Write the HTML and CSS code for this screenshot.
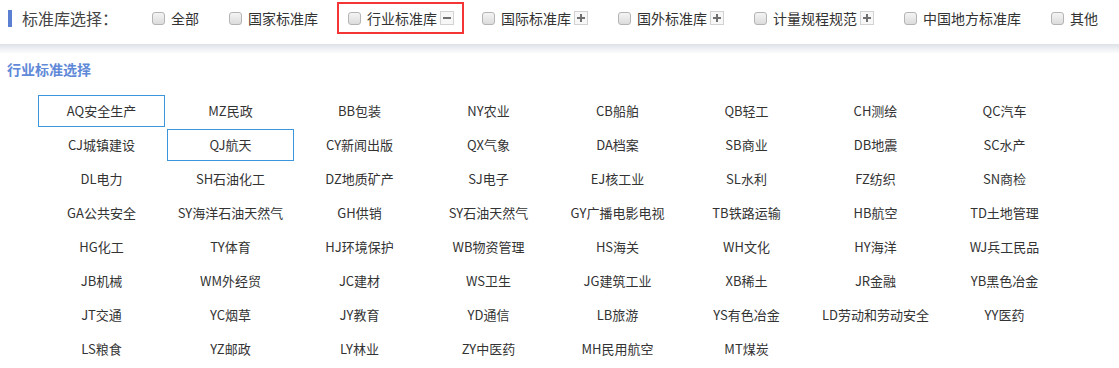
FILE: index.html
```html
<!DOCTYPE html>
<html>
    <head>
        <meta charset="UTF-8">
        <title>标准库选择</title>
        <link rel="stylesheet" href="styles.css">
    </head>
    <body>
        <div class="lib-bar">
            <span class="lib-title">标准库选择：</span>
            <ul class="lib-list">
                <li><i class="chk"></i>全部</li>
                <li><i class="chk"></i>国家标准库</li>
                <li class="on"><i class="chk"></i>行业标准库<b class="tog minus"></b></li>
                <li><i class="chk"></i>国际标准库<b class="tog plus"></b></li>
                <li><i class="chk"></i>国外标准库<b class="tog plus"></b></li>
                <li><i class="chk"></i>计量规程规范<b class="tog plus"></b></li>
                <li><i class="chk"></i>中国地方标准库</li>
                <li><i class="chk"></i>其他</li>
            </ul>
        </div>
        <div class="shade"></div>

        <div class="sub">
            <h3>行业标准选择</h3>
            <ul class="grid">
                <li class="sel">AQ安全生产</li>
                <li>MZ民政</li>
                <li>BB包装</li>
                <li>NY农业</li>
                <li>CB船舶</li>
                <li>QB轻工</li>
                <li>CH测绘</li>
                <li>QC汽车</li>
                <li>CJ城镇建设</li>
                <li class="sel">QJ航天</li>
                <li>CY新闻出版</li>
                <li>QX气象</li>
                <li>DA档案</li>
                <li>SB商业</li>
                <li>DB地震</li>
                <li>SC水产</li>
                <li>DL电力</li>
                <li>SH石油化工</li>
                <li>DZ地质矿产</li>
                <li>SJ电子</li>
                <li>EJ核工业</li>
                <li>SL水利</li>
                <li>FZ纺织</li>
                <li>SN商检</li>
                <li>GA公共安全</li>
                <li>SY海洋石油天然气</li>
                <li>GH供销</li>
                <li>SY石油天然气</li>
                <li>GY广播电影电视</li>
                <li>TB铁路运输</li>
                <li>HB航空</li>
                <li>TD土地管理</li>
                <li>HG化工</li>
                <li>TY体育</li>
                <li>HJ环境保护</li>
                <li>WB物资管理</li>
                <li>HS海关</li>
                <li>WH文化</li>
                <li>HY海洋</li>
                <li>WJ兵工民品</li>
                <li>JB机械</li>
                <li>WM外经贸</li>
                <li>JC建材</li>
                <li>WS卫生</li>
                <li>JG建筑工业</li>
                <li>XB稀土</li>
                <li>JR金融</li>
                <li>YB黑色冶金</li>
                <li>JT交通</li>
                <li>YC烟草</li>
                <li>JY教育</li>
                <li>YD通信</li>
                <li>LB旅游</li>
                <li>YS有色冶金</li>
                <li>LD劳动和劳动安全</li>
                <li>YY医药</li>
                <li>LS粮食</li>
                <li>YZ邮政</li>
                <li>LY林业</li>
                <li>ZY中医药</li>
                <li>MH民用航空</li>
                <li>MT煤炭</li>
            </ul>
        </div>
    </body>
</html>
```

FILE: styles.css
```css
*{ margin:0; padding:0; font-family:"Noto Sans CJK SC","Microsoft yahei",sans-serif;}
li{ list-style-type: none;}
body{
    background: #fff;
    color: #333;
}

/* 标准库选择 */
.lib-bar{
    display: flex;
    align-items: center;
    height: 32px;
    padding: 2px 0 10px 8px;
}
.lib-title{
    display: flex;
    align-items: center;
    font-size: 16px;
    color: #444;
    line-height: 20px;
}
.lib-title:before{
    content: "";
    width: 4px;
    height: 17px;
    margin-right: 10px;
    background: #5b80d2;
}
.lib-list{
    display: flex;
    align-items: center;
    gap: 30px;
    margin-left: 34px;
}
.lib-list li{
    display: flex;
    align-items: center;
    height: 32px;
    font-size: 14px;
    color: #333;
    cursor: pointer;
}
.lib-list li.on{
    box-sizing: border-box;
    border: 2px solid #f33535;
    padding: 0 8px 0 9px;
    margin: 0 -12px 0 -11px;
}
.chk{
    box-sizing: border-box;
    width: 13px;
    height: 13px;
    margin-right: 6px;
    border: 1px solid #b4b4b4;
    border-radius: 3px;
    background: linear-gradient(#f4f4f4, #dcdcdc);
}
.tog{
    position: relative;
    box-sizing: border-box;
    width: 14px;
    height: 14px;
    margin-left: 3px;
    border: 1px solid #d2d2d2;
    background: #f7f7f7;
}
.tog:before,
.tog.plus:after{
    content: "";
    position: absolute;
    background: #6f6f6f;
}
.tog:before{
    left: 2px;
    right: 2px;
    top: 5px;
    height: 2px;
}
.tog.plus:after{
    top: 2px;
    bottom: 2px;
    left: 5px;
    width: 2px;
}

.shade{
    height: 10px;
    background: linear-gradient(#dde2e8, #fff);
}

/* 行业标准选择 */
.sub h3{
    margin: 5px 0 0 7px;
    font-size: 14px;
    line-height: 20px;
    font-weight: bold;
    color: #6089d8;
}
.grid{
    display: grid;
    grid-template-columns: repeat(8, 127px);
    grid-auto-rows: 32px;
    column-gap: 2px;
    row-gap: 2px;
    margin: 16px 0 0 38px;
}
.grid li{
    box-sizing: border-box;
    border: 1px solid transparent;
    font-size: 13px;
    line-height: 30px;
    text-align: center;
    color: #333;
    cursor: pointer;
}
.grid li.sel{
    border-color: #3d96dc;
}
```
